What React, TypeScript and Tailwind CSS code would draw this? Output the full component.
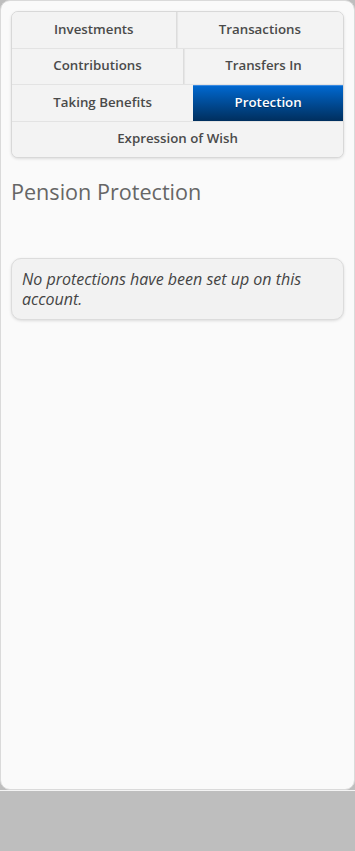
import React from "react";

const font = { fontFamily: '"Open Sans", "Noto Sans", sans-serif' };

function Tab({ label, active = false, first = false }: { label: string; active?: boolean; first?: boolean }) {
  if (active) {
    return (
      <div className="flex-auto h-[35.5px] flex items-center justify-center px-4 text-[13.3px] font-semibold text-white bg-gradient-to-b from-[#0068d0] to-[#002f5e] border-t border-[#3a8ae0] [text-shadow:0_1px_0_rgba(0,0,0,0.3)]">
        {label}
      </div>
    );
  }
  return (
    <div
      className={
        "flex-auto h-[35.5px] flex items-center justify-center px-4 text-[13.3px] font-semibold text-[#4a4a4a] bg-[#f3f3f3] " +
        (first ? "" : "border-l border-[#dcdcdc] shadow-[inset_1px_0_1px_rgba(0,0,0,0.06)]")
      }
    >
      {label}
    </div>
  );
}

export default function App() {
  return (
    <div className="w-[355px] h-[851px] flex flex-col bg-[#bebebe]" style={font}>
      <div className="h-[790px] bg-[#fafafa] border border-[#dadada] rounded-[10px] px-[10px] pt-[10px]">
        <div className="rounded-[7px] border border-[#d8d8d8] bg-[#f3f3f3] overflow-hidden shadow-[0_1px_3px_rgba(0,0,0,0.12)]">
          <div className="flex">
            <Tab label="Investments" first />
            <Tab label="Transactions" />
          </div>
          <div className="flex border-t border-[#e3e3e3]">
            <Tab label="Contributions" first />
            <Tab label="Transfers In" />
          </div>
          <div className="flex border-t border-[#e3e3e3]">
            <Tab label="Taking Benefits" first />
            <Tab label="Protection" active />
          </div>
          <div className="flex border-t border-[#e3e3e3]">
            <Tab label="Expression of Wish" first />
          </div>
        </div>
        <h1 className="mt-[21px] text-[21.6px] leading-[26px] font-normal text-[#666666]">Pension Protection</h1>
        <div className="mt-[53px] rounded-[10px] border border-[#dcdcdc] bg-[#f2f2f2] px-[10px] pt-[10px] pb-[10px] shadow-[0_1px_3px_rgba(0,0,0,0.12)]">
          <p className="italic text-[16px] leading-[20px] text-[#444444]">No protections have been set up on this account.</p>
        </div>
      </div>
      <div className="flex-1 border-t border-[#f4f4f4]" />
    </div>
  );
}
